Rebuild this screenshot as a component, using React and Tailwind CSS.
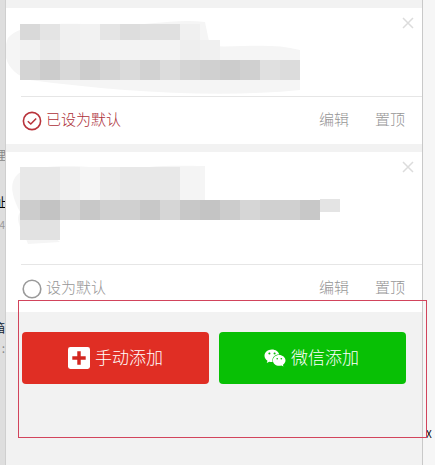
import React from "react";
import { FaWeixin } from "react-icons/fa";

const font = { fontFamily: '"Noto Sans CJK SC", "Noto Sans", sans-serif' };

function Mosaic({ rows, blobs, h }) {
  return (
    <svg width="345" height={h} viewBox={`6 0 345 ${h}`} className="block shrink-0">
      {blobs.map((d, i) => (
        <path key={i} d={d} fill="#f5f5f5" />
      ))}
      {rows.map((r, i) =>
        r.c.map((c, j) => (
          <rect key={`${i}-${j}`} x={r.x + j * 20} y={r.y} width="20" height={r.h} fill={c} />
        ))
      )}
      {h > 100 ? <rect x="320" y="47" width="20" height="13" fill="#e4e4e4" /> : null}
    </svg>
  );
}

const rows1 = [
  { x: 20, y: 16, h: 16, c: ["#d9d9d9", "#e4e4e4", "#f0f0f0", "#f2f2f2", "#e5e5e5", "#dddddd", "#e0e0e0", "#e0e0e0", "#f0f0f0"] },
  { x: 20, y: 32, h: 20, c: ["#f2f2f2", "#eaeaea", "#f0f0f0", "#f2f2f2", "#f3f3f3", "#f3f3f3", "#f3f3f3", "#f3f3f3", "#eeeeee", "#f0f0f0"] },
  { x: 20, y: 52, h: 20, c: ["#d4d4d4", "#cccccc", "#d8d8d8", "#cdcdcd", "#d4d4d4", "#dadada", "#d2d2d2", "#dcdcdc", "#d4d4d4", "#d0d0d0", "#cccccc", "#d0d0d0", "#e0e0e0", "#dcdcdc"] },
];
const rows2 = [
  { x: 20, y: 15, h: 33, c: ["#e8e8e8", "#e8e8e8", "#f0f0f0", "#f5f5f5", "#ececec", "#e8e8e8", "#e8e8e8", "#e8e8e8", "#f4f4f4"] },
  { x: 20, y: 48, h: 20, c: ["#cccccc", "#c3c3c3", "#d4d4d4", "#c8c8c8", "#d0d0d0", "#d0d0d0", "#c8c8c8", "#d6d6d6", "#c8c8c8", "#c4c4c4", "#cccccc", "#d6d6d6", "#d0d0d0", "#d0d0d0", "#c8c8c8"] },
  { x: 20, y: 68, h: 20, c: ["#e2e2e2", "#e2e2e2"] },
];

function Actions({ children }) {
  return (
    <div className="ml-[15px] h-12 flex items-center border-t border-[#e6e6e6] pr-[17px] text-[15px] text-[#969696] font-light">
      {children}
      <span className="ml-auto pb-[2px]">编辑</span>
      <span className="ml-[26px] pb-[2px]">置顶</span>
    </div>
  );
}

function Close() {
  return (
    <svg width="12" height="12" viewBox="0 0 12 12" className="ml-auto mt-[9px] mr-[8px] shrink-0">
      <path d="M1 1L11 11M11 1L1 11" stroke="#dcdcdc" strokeWidth="1.5" />
    </svg>
  );
}

export default function App() {
  return (
    <div className="relative flex w-[435px] h-[465px] overflow-hidden bg-[#f6f6f6]" style={font}>
      <div className="w-[6px] shrink-0 bg-[#dedede] border-r border-[#cfcfcf] flex flex-col items-end overflow-hidden text-[12px] leading-4">
        <span className="mt-[147px] mr-[-1px] text-[#888] whitespace-nowrap">理</span>
        <span className="mt-[31px] mr-[-1px] text-black whitespace-nowrap">址</span>
        <span className="mt-[7px] text-[#999] text-[10px] whitespace-nowrap">54</span>
        <span className="mt-[87px] text-[#123] whitespace-nowrap">箱</span>
        <span className="mt-[4px] text-[#888] whitespace-nowrap">:</span>
        <span className="mt-[67px] text-[#444] text-[10px] whitespace-nowrap">〉</span>
      </div>
      <div className="w-[417px] shrink-0 bg-[#f2f2f2] border-r border-[#c9c9c9] pt-2 flex flex-col gap-2">
        <div className="bg-white">
          <div className="flex h-[88px]">
            <Mosaic
              rows={rows1}
              h={88}
              blobs={["M8 30C20 15 60 14 100 17C140 20 170 10 205 14L210 38C240 40 270 34 300 42L300 82C220 90 120 84 30 72C10 66 0 50 8 30Z"]}
            />
            <Close />
          </div>
          <Actions>
            <svg width="20" height="20" viewBox="0 0 20 20" className="ml-px shrink-0">
              <circle cx="10" cy="10" r="8.6" fill="none" stroke="#b8333b" strokeWidth="1.6" />
              <path d="M5.8 10.2L8.8 13L14.2 7.4" fill="none" stroke="#b8333b" strokeWidth="1.5" />
            </svg>
            <span className="ml-[4px] pb-[2px] text-[#ad3038]">已设为默认</span>
          </Actions>
        </div>
        <div className="bg-white">
          <div className="flex h-[112px]">
            <Mosaic
              rows={rows2}
              h={112}
              blobs={["M18 22C30 12 90 12 125 20C150 12 180 14 205 14L205 48L20 60C10 40 10 30 18 22Z", "M20 60L60 90L28 92C24 80 14 70 20 60Z"]}
            />
            <Close />
          </div>
          <Actions>
            <svg width="20" height="20" viewBox="0 0 20 20" className="ml-px shrink-0">
              <circle cx="10" cy="10" r="8.8" fill="none" stroke="#9a9a9a" strokeWidth="1.6" />
            </svg>
            <span className="ml-[4px] pb-[2px]">设为默认</span>
          </Actions>
        </div>
        <div className="flex gap-[10px] pl-[16px] pt-3 font-light text-white text-[17px]">
          <button className="w-[187px] h-[52px] rounded bg-[#e02e24] flex items-center justify-center gap-[5px]">
            <svg width="22" height="22" viewBox="0 0 23 23" className="shrink-0">
              <rect width="23" height="23" rx="2.5" fill="#fff" />
              <path d="M11.5 4.5V18.5M4.5 11.5H18.5" stroke="#d3261f" strokeWidth="3.6" />
            </svg>
            <span className="pb-[3px]">手动添加</span>
          </button>
          <button className="w-[187px] h-[52px] rounded bg-[#08c005] flex items-center justify-center gap-[5px] pr-[2px]">
            <FaWeixin size={22} color="#fff" className="shrink-0" />
            <span className="pb-[3px]">微信添加</span>
          </button>
        </div>
      </div>
      <div className="flex-1 relative">
        <span className="absolute left-[3px] top-[426px] text-[10px] text-black whitespace-nowrap">X</span>
      </div>
      <div className="absolute left-[18px] top-[300px] w-[409px] h-[138px] border border-[#d2445c]" />
    </div>
  );
}
